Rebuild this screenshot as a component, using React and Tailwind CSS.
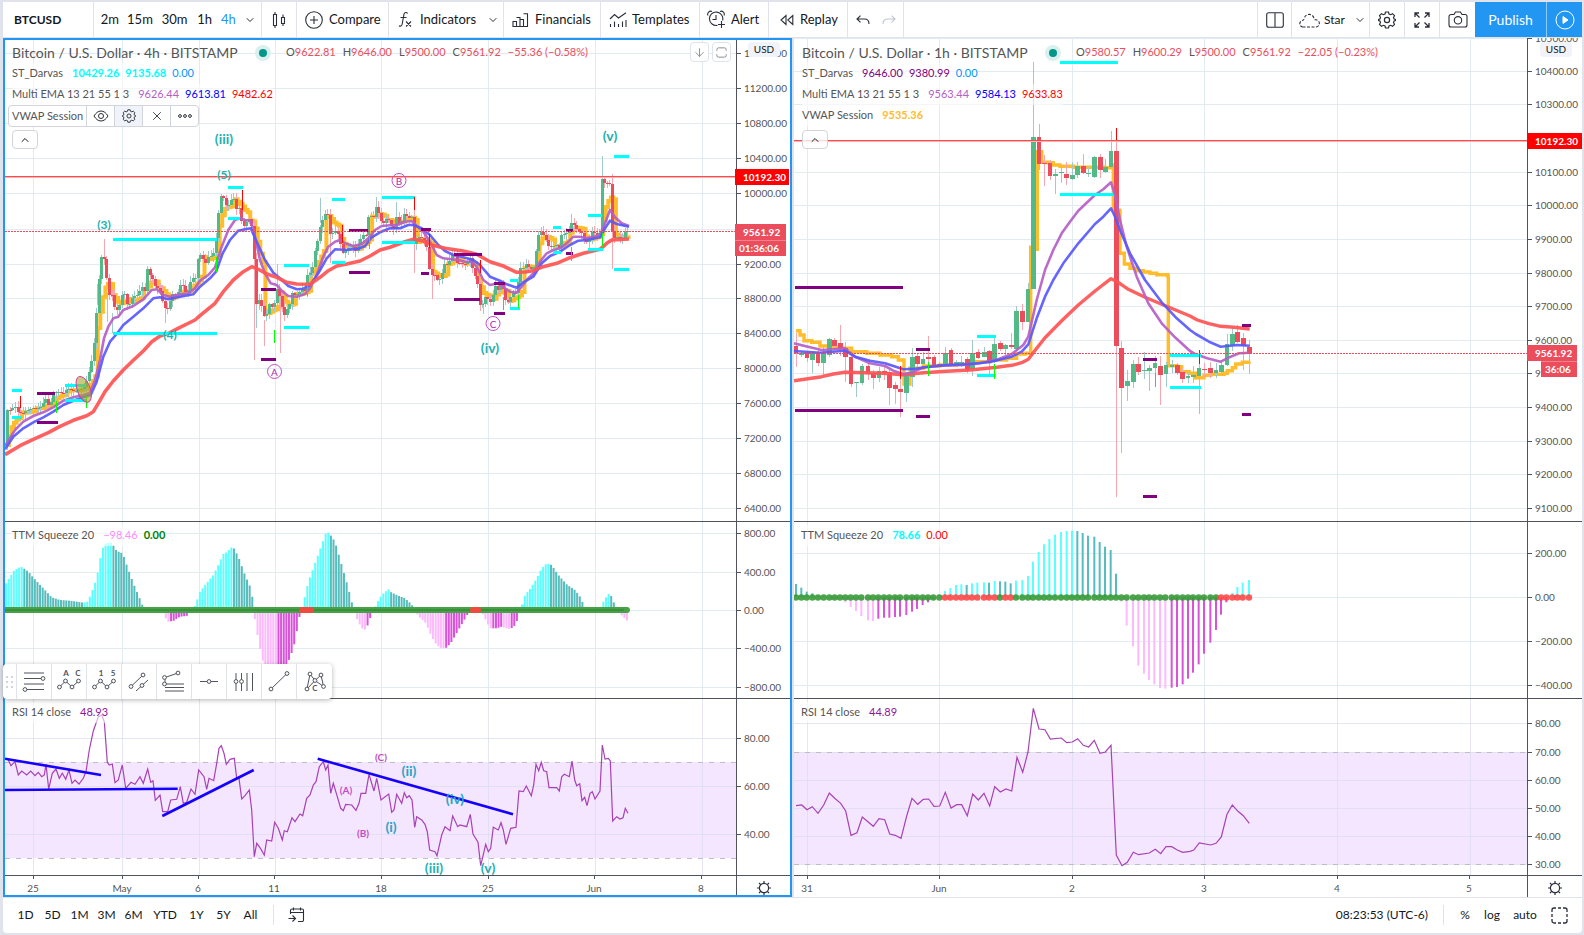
import React from 'react';
import { ChevronDown, ChevronUp, ArrowDown, X } from 'lucide-react';

/* ===== DATA ===== */
// Series are kept as flat "x,y x,y" strings in thirds of a pixel, relative to a chunk origin
const pts = (x0, y0, str) =>
  str.trim().split(/\s+/).map(p => {
    const [x, y] = p.split(',').map(Number);
    return [x0 + x / 3, y0 + y / 3];
  });
const rows = (x0, y0, str) =>
  str.trim().split(/\s+/).map(p => {
    const [x, ...ys] = p.split(',').map(Number);
    return [x0 + x / 3, ...ys.map(y => y0 + y / 3)];
  });
const segs = (x0, y0, list) => list.map(([x1, x2, y]) => [x0 + x1 / 3, x0 + x2 / 3, y0 + y / 3]);
const ticks = (x0, y0, list) => list.map(([x, a, b]) => [x0 + x / 3, y0 + a / 3, y0 + b / 3]);

const CLOSE_4H = [
  ...pts(0, 160, `16,855 19,748 30,750 45,738 55,757 70,760 80,752 95,745 110,745 125,740 140,712 148,745 160,700 175,695 190,700 205,685
    213,690 225,695 240,690 250,685 258,670 268,635 278,590 285,530 292,435 303,290 312,290 320,345 325,405 337,405 347,460 357,440
    365,425 370,362 377,430 388,435 400,408 415,405 425,378 435,395 443,325 452,348 460,360 468,385 477,385 485,400 490,435 500,450
    508,445 515,400 525,405 535,395 547,358 552,400 565,390 575,355 590,352 597,278 607,290 617,310 625,290 640,285 650,225 657,150
    665,100 672,115 682,145 690,125 700,110 710,150 720,140 727,205 735,195 745,175 753,185 762,240 765,460 775,410 782,430 790,450
    797,490 805,430 815,440 822,450 828,380 837,400 845,430 851,475 860,450 870,430 877,400 887,405 897,400 907,385 917,395 925,325
    935,350 942,280 950,265 958,210 965,190 973,165 983,160 993,235 1003,210 1012,215 1020,245 1030,280 1040,265 1050,265 1060,260
    1068,275 1080,240 1090,225 1100,225 1108,150 1118,185 1128,140 1140,170 1147,195 1160,175 1169,180`),
  ...pts(390, 120, `0,290 8,345 20,290 30,315 43,280 55,295 65,290 73,375 85,350 97,355 108,365 115,400 120,465 133,465 145,485 155,465
    163,430 175,435 185,405 195,405 203,430 215,430 230,435 243,410 250,455 262,480 270,555 280,550 290,520 297,550 305,545 315,495
    325,510 335,490 343,520 350,555 360,535 370,520 383,520 388,445 400,445 410,430 420,450 430,445 437,410 443,350 453,335 465,350
    477,378 490,380 500,375 508,385 515,345 530,340 540,335 547,300 557,325 570,335 577,340 585,365 597,365 607,335 620,345 630,340
    637,170 645,190 655,190 663,195 668,360 680,350 692,355 702,352 708,320 714,335`),
];

const EMA_4H = [
  {
    color: '#b560c6', width: 2.6, data: [
      ...pts(0, 160, `15,858 45,810 70,785 100,768 130,757 160,742 190,722 220,712 250,705 270,698 285,660 300,600 312,535 325,500 340,475
        355,470 370,450 400,438 430,418 455,390 470,388 490,405 510,410 540,403 565,400 585,385 600,362 625,345 645,322 665,260 685,210
        705,180 720,175 735,180 752,182 765,230 780,300 795,340 812,370 830,375 845,392 865,408 890,410 915,402 930,385 950,345 970,290
        985,260 1005,245 1020,240 1035,250 1060,258 1085,252 1105,235 1125,210 1145,198 1170,196`),
      ...pts(390, 120, `20,315 45,305 65,303 80,318 100,335 120,365 140,405 160,415 185,418 205,420 225,425 245,425 260,440 280,480 300,495
        325,490 345,505 360,515 380,518 395,500 410,480 430,460 450,425 470,400 490,390 510,385 530,370 550,350 570,350 590,355 610,350
        630,345 645,310 660,270 675,292 695,310 717,318`),
    ],
  },
  {
    color: '#5858ff', width: 2.6, data: [
      ...pts(0, 160, `15,868 40,830 70,805 100,787 130,772 160,755 190,735 220,722 250,712 272,705 290,665 310,590 330,545 350,522 370,495
        400,470 430,445 460,415 480,412 505,418 540,410 580,403 600,380 630,355 648,335 668,280 690,240 715,212 735,208 752,205 770,245
        795,300 820,338 840,355 865,378 890,388 910,386 930,375 955,340 980,295 1005,268 1040,270 1075,266 1095,258 1115,232 1140,217`),
      ...pts(390, 120, `0,325 30,325 55,315 70,315 95,325 120,345 145,375 165,393 190,405 220,412 250,420 270,435 300,470 330,482 350,493
        380,503 400,487 430,470 455,430 480,408 510,395 540,375 565,362 590,360 630,352 645,325 660,302 680,312 717,320`),
    ],
  },
  {
    color: '#ff5454', width: 3.6, data: [
      ...pts(0, 160, `15,884 60,857 100,838 145,818 180,799 220,781 260,767 280,755 295,730 315,695 340,663 370,630 400,601 430,573 455,545
        480,528 510,518 540,502 585,480 600,467 645,430 670,395 700,360 730,335 755,320 775,328 800,342 830,352 860,367 890,372 930,373
        960,352 985,332 1010,318 1040,312 1080,303 1110,288 1140,270`),
      ...pts(390, 120, `0,382 40,367 70,358 95,362 125,375 165,385 220,393 260,403 300,425 340,438 380,457 405,456 430,452 460,440 500,430
        540,413 580,400 630,388 650,370 665,360 717,357`),
    ],
  },
];

const BOX_4H = {
  cyan: [
    ...segs(0, 160, [[36, 66, 690], [36, 66, 771], [195, 258, 675], [195, 258, 721], [340, 652, 236], [340, 652, 519], [683, 729, 82],
      [683, 720, 174], [851, 927, 316], [851, 927, 502], [996, 1034, 116], [996, 1034, 307], [1147, 1246, 110], [1147, 1246, 246]]),
    ...segs(390, 120, [[488, 512, 320], [488, 512, 397], [595, 637, 285], [595, 640, 386], [672, 717, 109], [672, 717, 448], [360, 383, 480], [360, 389, 565]]),
  ],
  purple: [
    ...segs(0, 160, [[111, 165, 698], [111, 173, 785], [782, 828, 387], [782, 828, 597], [1048, 1103, 209], [1048, 1110, 335]]),
    ...segs(390, 120, [[92, 122, 327], [92, 118, 458], [191, 275, 401], [191, 270, 536], [313, 344, 488], [313, 344, 580], [527, 550, 331], [527, 550, 398]]),
  ],
};

const TICKS_4H = {
  red: [...ticks(0, 160, [[61, 707, 745], [727, 90, 150], [1028, 195, 250]]), ...ticks(390, 120, [[73, 230, 270], [118, 342, 385], [271, 420, 460]])],
  green: [
    ...ticks(0, 160, [[169, 722, 760], [259, 708, 744], [648, 290, 335], [823, 510, 550], [922, 370, 408], [1107, 225, 268]]),
    ...ticks(390, 120, [[340, 530, 570], [385, 525, 565], [545, 380, 424], [637, 340, 380]]),
  ],
  wickUp: [
    ...ticks(0, 160, [[338, 460, 520], [770, 410, 505], [962, 114, 190], [1130, 110, 150], [292, 372, 435]]),
    ...ticks(390, 120, [[20, 245, 290], [280, 550, 582], [545, 282, 330], [637, 108, 170]]),
  ],
  wickDown: [
    ...ticks(0, 160, [[313, 237, 300], [322, 400, 486], [497, 450, 489], [764, 240, 600], [794, 480, 557], [840, 400, 580], [832, 313, 380], [991, 150, 308]]),
    ...ticks(390, 120, [[73, 270, 458], [126, 465, 537], [272, 540, 572], [668, 162, 448]]),
  ],
};

const SQUEEZE_4H = [
  ...pts(0, 515, `18,205 30,185 42,167 55,158 66,156 85,170 100,188 130,220 155,247 180,255 210,257 250,263 262,260 272,240 290,190 303,118
    312,87 335,82 350,108 368,115 380,150 400,205 415,240 428,272 440,283 460,275 480,277 490,286 496,308 505,320 520,318 540,305 560,303
    572,287 585,272 600,230 615,210 640,180 660,140 668,118 680,112 692,98 700,97 715,125 735,180 755,225 760,280 768,335 780,400 790,445
    830,500 860,445 870,430 885,380 897,310 905,285 912,255 925,200 945,145 965,90 980,48 990,58 1005,80 1025,150 1045,220 1060,280
    1070,310 1085,340 1098,345 1110,310 1120,290 1130,265 1145,240 1165,222`),
  ...pts(390, 515, `0,230 20,240 45,250 65,268 75,290 90,308 108,325 125,365 140,390 155,400 170,398 185,380 205,345 220,320 237,290 260,280
    272,285 285,310 300,340 320,340 335,335 355,342 370,338 380,320 390,290 405,240 420,222 440,190 455,160 470,145 485,150 505,180
    530,208 555,225 570,245 585,278 610,290 630,285 640,260 652,240 660,233 668,255 680,280 692,298 711,317`),
];

const RSI_4H = [
  ...pts(0, 515, `15,730 25,735 33,752 45,740 55,780 65,768 80,780 92,768 105,782 115,772 125,785 133,780 138,748 146,822 157,775 168,762
    178,790 187,775 197,793 207,765 216,805 225,795 237,807 250,790 258,770 268,705 280,648 295,605 305,600 313,620 322,742 328,750
    337,747 345,803 355,795 367,750 377,820 393,802 405,808 420,785 430,805 443,762 452,802 459,797 466,856 480,840 488,890 503,890
    512,855 530,853 541,815 550,865 560,862 573,822 585,838 596,765 612,785 620,823 627,790 641,797 650,745 657,700 664,692 672,715
    679,748 690,733 703,730 710,790 717,790 725,852 735,842 748,825 755,885 763,1025 770,985 780,998 793,1020 800,975 815,978 824,922
    835,940 847,975 853,947 862,950 876,908 885,920 900,897 908,902 920,850 930,840 940,810 948,800 958,755 970,740 977,765 984,750
    992,835 1000,805 1012,845 1022,880 1030,887 1037,868 1055,870 1068,886 1077,865 1083,835 1097,835 1107,778 1122,828 1130,790
    1143,855 1166,837`),
  ...pts(390, 515, `5,892 12,885 20,838 35,865 43,833 50,848 58,842 66,855 74,937 80,905 95,915 105,928 112,950 119,1005 135,1010 141,1022
    155,960 165,935 180,947 188,903 203,935 210,930 230,935 241,898 249,957 264,982 272,1052 287,988 295,1010 302,1000 310,937 325,945
    333,923 340,945 348,988 362,940 378,937 387,828 400,830 409,813 424,842 431,810 438,748 446,767 454,742 461,767 470,770 477,818
    500,818 508,828 515,785 523,778 538,785 546,738 554,795 560,812 569,806 576,857 584,847 591,872 600,835 607,830 615,852 630,828
    637,690 645,732 655,730 661,738 668,918 680,905 690,912 699,908 706,880 714,895`),
];

// x, open, close, high, low
const CANDLES_1H = [
  ...rows(790, 100, `18,738,760,700,800 35,765,758,755,770 51,760,775,755,785 67,780,760,755,820 84,758,788,750,798 101,788,758,735,825
    118,765,718,713,772 134,720,738,715,745 151,730,747,675,768 167,745,772,725,845 183,770,852,765,860 199,850,846,845,892
    216,848,798,792,855 234,797,822,790,840 250,820,835,810,868 267,833,812,800,845 284,813,820,800,840 299,815,863,805,915
    316,855,867,845,912 332,868,877,800,950 350,878,825,815,905 367,830,772,745,860 383,768,793,760,800 399,793,777,755,795
    416,770,777,708,792 432,770,795,765,800 449,793,796,785,800 466,792,760,742,795 483,750,796,745,800 499,792,787,780,795
    515,790,785,768,800 532,778,810,770,820 547,808,760,720,827 564,755,773,748,778 583,770,756,740,772 599,753,785,750,822
    614,785,732,715,790 631,729,747,724,752 647,747,735,733,765 664,736,741,700,748 680,748,632,618,752 698,633,665,612,690
    714,665,567,550,667 731,567,111,-113,567 747,111,192,72,210 763,188,192,165,257 780,190,228,180,240 796,228,222,208,283
    814,220,217,195,250 830,221,234,185,254 847,236,225,185,240 863,225,198,185,235 880,198,218,162,222 896,223,219,200,232
    914,230,170,167,235 931,172,210,162,235 946,215,200,178,220 963,202,153,92,205 979,153,737,85,1190 995,745,863,723,1060
    1012,857,843,810,902 1030,845,792,780,865 1046,792,815,770,825 1063,812,809,755,837 1079,812,804,795,873 1095,804,789,768,820
    1111,798,825,768,915 1128,822,795,785,860 1146,800,795,780,820 1162,795,818,788,825 1178,815,837,805,850`),
  ...rows(1184, 100, `12,833,829,820,850 29,831,825,797,850 45,828,804,780,942 62,807,811,790,830 80,804,820,787,835 96,818,810,790,833
    113,817,795,785,820 129,795,732,702,797 145,735,702,680,752 161,697,725,675,730 178,714,738,700,810 196,740,761,720,822`),
];

const VWAP_1H = [
  ...pts(790, 100, `18,692 30,705 42,722 65,727 90,738 120,742 155,745 185,755 230,760 270,765 305,770 325,780 342,852 360,805 400,798 450,795
    500,793 545,785 600,780 650,775 680,762 705,760 722,738 722,442 740,448 742,155 755,187 775,188 790,195 810,199 850,202 945,203
    965,195 970,330 987,332 990,460 1003,492 1020,505 1040,512 1060,516 1080,520 1100,524 1133,528 1135,797 1160,800 1175,815`),
  ...pts(1184, 100, `15,820 35,833 60,826 80,823 120,820 130,812 145,803 155,792 175,787 195,784`),
];

const EMA_1H = [
  {
    color: '#ff5454', width: 3.4, data: [
      ...pts(790, 100, `12,842 95,830 130,822 165,817 280,820 340,824 400,818 470,814 540,810 620,802 665,796 695,788 715,778 740,745 765,713
        815,662 865,615 915,573 963,536 985,547 1015,568 1065,592 1115,613`),
      ...pts(1184, 100, `18,648 40,660 75,671 110,679 150,682 197,687`),
    ],
  },
  {
    color: '#b560c6', width: 2.6, data: [
      ...pts(790, 100, `12,730 60,742 95,750 130,748 165,745 195,770 240,790 285,798 310,812 340,822 365,818 400,802 450,797 520,795 570,790
        625,778 665,762 700,735 715,710 740,600 765,510 790,450 815,400 840,365 865,332 890,308 915,285 940,268 963,247 975,285
        990,360 1010,440 1040,530 1075,610 1115,670 1155,712`),
      ...pts(1184, 100, `18,753 35,763 70,775 110,785 140,770 165,760 197,758`),
    ],
  },
  {
    color: '#5858ff', width: 2.6, data: [
      ...pts(790, 100, `12,753 90,758 165,752 195,770 240,782 285,790 340,808 375,806 420,800 470,795 540,792 600,786 665,770 695,755 715,733
        740,655 765,590 790,540 820,490 865,430 915,372 940,350 963,325 975,350 990,390 1020,460 1065,540 1115,607 1160,655`),
      ...pts(1184, 100, `18,690 35,702 75,725 110,740 160,735 197,737`),
    ],
  },
];

const BOX_1H = {
  cyan: segs(790, 100, [[561, 618, 709], [561, 618, 826], [810, 970, 282], [810, 984, -113], [1140, 1232, 766], [1140, 1232, 860]]),
  purple: [
    ...segs(790, 100, [[14, 338, 561], [14, 338, 930], [378, 420, 746], [378, 420, 948], [1058, 1100, 776], [1058, 1100, 1189]]),
    ...segs(1184, 100, [[174, 200, 674], [174, 200, 941]]),
  ],
};

const TICKS_1H = {
  red: [...ticks(790, 100, [[332, 798, 838], [979, 83, 125]]), ...ticks(1184, 100, [[46, 750, 793]])],
  green: ticks(790, 100, [[416, 785, 828], [614, 792, 836], [1095, 820, 860]]),
  wickUp: [],
  wickDown: [],
};

const SQUEEZE_1H = [
  ...pts(790, 515, `18,207 34,218 50,230 67,235 84,243 101,245 118,250 134,250 150,252 166,262 182,276 198,288 214,303 234,316 249,318
    265,311 282,308 298,308 315,306 330,305 349,300 366,290 381,282 398,270 414,262 430,252 448,240 465,228 481,219 498,210 514,208
    530,210 546,205 562,203 582,202 597,203 614,198 630,199 646,200 662,205 678,197 697,195 714,183 729,140 746,111 762,88 778,72
    795,59 813,51 830,48 846,47 862,48 878,54 894,62 913,65 929,81 945,95 962,105 978,176 994,260 1010,332 1029,394 1045,452
    1062,476 1077,495 1093,508 1110,519 1126,521 1145,518 1161,516 1178,508`),
  ...pts(1184, 515, `12,491 27,473 44,448 60,416 79,383 96,345 111,299 127,262 145,234 160,216 176,203 195,195`),
];

const RSI_1H = [
  ...pts(790, 515, `18,872 35,870 51,884 67,875 84,895 101,870 118,834 134,850 152,865 167,888 183,961 201,953 217,906 250,934 267,911
    284,914 299,957 316,961 333,970 350,903 366,850 383,868 400,853 416,852 432,874 449,873 466,832 483,879 500,869 515,869 532,902
    548,837 565,855 582,835 599,873 614,815 631,831 648,822 665,828 681,727 698,772 714,711 730,580 747,642 765,644 781,672 814,669
    830,683 847,681 863,671 880,691 896,696 913,676 930,715 946,711 963,691 979,1020 996,1052 1012,1042 1030,1012 1046,1019
    1078,1014 1096,1003 1112,1016 1128,995 1145,995 1162,1005 1178,1012`),
  ...pts(1184, 515, `18,1009 29,1005 46,984 80,990 96,985 112,966 129,898 145,870 162,889 178,902 196,925`),
];

/* ===== SERIES HELPERS ===== */
const resample = (data, step) => {
  const out = [];
  let j = 0;
  for (let x = data[0][0]; x <= data[data.length - 1][0]; x += step) {
    while (j < data.length - 2 && data[j + 1][0] < x) j++;
    const [x1, y1] = data[j];
    const [x2, y2] = data[j + 1];
    out.push([x, y1 + ((y2 - y1) * (x - x1)) / (x2 - x1)]);
  }
  return out;
};

const toCandles = closes =>
  closes.slice(1).map(([x, c], i) => {
    const o = closes[i][1];
    const up = 1 + Math.abs(Math.sin(i * 12.9)) * 5;
    const dn = 1 + Math.abs(Math.sin(i * 7.3 + 1)) * 5;
    return [x, o, c, Math.min(o, c) - up, Math.max(o, c) + dn];
  });

// running session average, restarted every six bars
const toVwap = closes => {
  let sum = 0;
  let n = 0;
  return closes.map(([x, y], i) => {
    if (i % 6 === 0) { sum = 0; n = 0; }
    sum += i ? (y + closes[i - 1][1]) / 2 : y;
    n++;
    return [x + 1, sum / n];
  });
};

const line = data => data.map(([x, y], i) => `${i ? 'L' : 'M'}${x.toFixed(1)} ${y.toFixed(1)}`).join('');
const stepLine = data => data.map(([x, y], i) => (i ? `H${x.toFixed(1)}V${y.toFixed(1)}` : `M${x.toFixed(1)} ${y.toFixed(1)}`)).join('');

const BARS_4H = resample(CLOSE_4H, 2.54);

const CHARTS = [
  {
    id: '4h',
    x: 5, top: 40, plotW: 731, axisW: 54, bottom: 895,
    gridX: [33, 122, 199, 275, 381, 488, 595, 702],
    times: [[33, '25'], [122, 'May'], [198, '6'], [274, '11'], [381, '18'], [488, '25'], [594, 'Jun'], [701, '8']],
    price: [[53, '11600.00'], [88, '11200.00'], [123, '10800.00'], [158, '10400.00'], [193, '10000.00'], [229, null], [264, '9200.00'], [298, '8800.00'],
      [333, '8400.00'], [368, '8000.00'], [403, '7600.00'], [438, '7200.00'], [473, '6800.00'], [508, '6400.00']],
    squeezeAxis: [[533, '800.00'], [572, '400.00'], [610, '0.00'], [648, '−400.00'], [687, '−800.00']],
    rsiAxis: [[738, '80.00'], [786, '60.00'], [834, '40.00']],
    candles: toCandles(BARS_4H), bodyW: 3,
    vwap: toVwap(BARS_4H), vwapW: 4, ema: EMA_4H, box: BOX_4H, ticks: TICKS_4H,
    levelY: 176, lastY: 231,
    squeeze: resample(SQUEEZE_4H, 2.62), barW: 2, zero: 610, dots: null,
    redDots: [[299, 314], [470, 481]],
    rsi: RSI_4H, band: [762, 858],
  },
  {
    id: '1h',
    x: 794, top: 38, plotW: 733, axisW: 55, bottom: 897,
    gridX: [807, 939, 1072, 1204, 1337, 1470],
    times: [[807, '31'], [939, 'Jun'], [1072, '2'], [1204, '3'], [1337, '4'], [1469, '5']],
    price: [[38, '10500.00'], [71, '10400.00'], [104, '10300.00'], [172, '10100.00'], [205, '10000.00'], [239, '9900.00'], [273, '9800.00'], [306, '9700.00'],
      [340, '9600.00'], [373, '9500.00'], [407, '9400.00'], [441, '9300.00'], [474, '9200.00'], [508, '9100.00']],
    squeezeAxis: [[553, '200.00'], [597, '0.00'], [641, '−200.00'], [685, '−400.00']],
    rsiAxis: [[723, '80.00'], [752, '70.00'], [780, '60.00'], [808, '50.00'], [836, '40.00'], [864, '30.00']],
    candles: CANDLES_1H, bodyW: 4.4,
    vwap: VWAP_1H, vwapW: 3.4, ema: EMA_1H, box: BOX_1H, ticks: TICKS_1H,
    levelY: 140, lastY: 353,
    squeeze: SQUEEZE_1H, barW: 2, zero: 597, dots: 3,
    redDots: [[943, 998], [1003, 1014], [1220, 1260]],
    rsi: RSI_1H, band: [752, 864],
  },
];

/* ===== CHART PANES ===== */
const Grid = ({ c, ys, y1, y2 }) => (
  <g shapeRendering="crispEdges" fill="#e1ecf2">
    {c.gridX.map(x => <rect key={x} x={x} y={y1} width="1" height={y2 - y1} />)}
    {ys.map(([y]) => <rect key={y} x={c.x} y={y} width={c.plotW} height="1" />)}
  </g>
);

const Plot = ({ c, y1, y2, label, children }) => (
  <svg role="img" aria-label={label} viewBox={`${c.x} ${y1} ${c.plotW} ${y2 - y1}`} preserveAspectRatio="none" className="block h-full min-w-0 flex-1 bg-white">
    {children}
  </svg>
);

const Axis = ({ c, y1, y2, labels, children }) => {
  const x = c.x + c.plotW + 1;
  return (
    <div className={`relative h-full shrink-0 border-l border-[#50535e] bg-white ${c.id === '4h' ? 'w-[54px]' : 'w-[55px]'}`}>
      <svg viewBox={`${x} ${y1} ${c.axisW - 1} ${y2 - y1}`} className="block h-full w-full" fontSize="10" fill="#555">
        {labels.filter(l => l[1]).map(([y, t]) => (
          <g key={y}>
            <rect x={x} y={y} width="4" height="1" fill="#50535e" shapeRendering="crispEdges" />
            <text x={x + 7} y={y + 4}>{t}</text>
          </g>
        ))}
        {children}
      </svg>
    </div>
  );
};

const Wave = ({ x, y, children, color = '#1fb0b0', size = 12 }) => (
  <text x={x} y={y - 1} fontSize={size} fontWeight="700" fill={color} textAnchor="middle" dominantBaseline="central">{children}</text>
);

const CircleWave = ({ x, y, children }) => (
  <g>
    <circle cx={x} cy={y} r="7" fill="none" stroke="#c44bc4" />
    <text x={x} y={y} fontSize="10" fill="#b01fb0" textAnchor="middle" dominantBaseline="central">{children}</text>
  </g>
);

const PricePlot = ({ c }) => (
  <Plot c={c} y1={c.top} y2={521} label={`BTCUSD ${c.id} price`}>
    <Grid c={c} ys={c.price} y1={c.top} y2={521} />
    <path d={stepLine(c.vwap)} fill="none" stroke="#ffbd2b" strokeWidth={c.vwapW} />
    <g shapeRendering="crispEdges">
      {c.ticks.wickUp.map(([x, a, b]) => <rect key={x} x={x - 0.5} y={a} width="1" height={b - a} fill="#a0c9cb" />)}
      {c.ticks.wickDown.map(([x, a, b]) => <rect key={x} x={x - 0.5} y={a} width="1" height={b - a} fill="#f5a6ae" />)}
      {c.candles.map(([x, o, cl, h, l], i) => (
        <rect key={i} x={x - 0.5} y={h} width="1" height={l - h} fill={cl < o ? '#a0c9cb' : '#f5a6ae'} />
      ))}
    </g>
    <g shapeRendering="crispEdges">
      {c.candles.map(([x, o, cl], i) => (
        <rect key={i} x={x - c.bodyW / 2} y={Math.min(o, cl)} width={c.bodyW} height={Math.max(1, Math.abs(cl - o))} fill={cl < o ? '#53b987' : '#eb4d5c'} />
      ))}
    </g>
    {c.ema.map(e => <path key={e.color} d={line(e.data)} fill="none" stroke={e.color} strokeWidth={e.width} strokeOpacity=".92" strokeLinejoin="round" />)}
    <g shapeRendering="crispEdges">
      {c.box.purple.map(([x1, x2, y], i) => <rect key={i} x={x1} y={y - 1} width={x2 - x1} height="3" fill="#800080" />)}
      {c.box.cyan.map(([x1, x2, y], i) => <rect key={i} x={x1} y={y - 1} width={x2 - x1} height="3" fill="#00ffff" />)}
      {c.ticks.red.map(([x, a, b]) => <rect key={x} x={x - 0.5} y={a} width="1" height={b - a} fill="#ff0000" />)}
      {c.ticks.green.map(([x, a, b]) => <rect key={x} x={x - 0.5} y={a} width="1" height={b - a} fill="#00ff00" />)}
      <rect x={c.x} y={c.levelY} width={c.plotW} height="1" fill="#ff4b4b" />
      <rect x={c.x} y={c.levelY + 1} width={c.plotW} height="1" fill="#ffb0b0" />
      <path d={`M${c.x} ${c.lastY + 0.5}H${c.x + c.plotW}`} stroke="#eb4d5c" strokeDasharray="2 1" />
    </g>
    {c.id === '4h' && (
      <g>
        <ellipse cx="83.7" cy="389.3" rx="6.5" ry="13.5" transform="rotate(-20 83.7 389.3)" fill="#a5a52a" fillOpacity=".6" stroke="#d43f9f" />
        <Wave x={104} y={225}>(3)</Wave>
        <Wave x={224} y={175}>(5)</Wave>
        <Wave x={170} y={335}>(4)</Wave>
        <Wave x={224} y={139} size={14}>(iii)</Wave>
        <Wave x={490} y={348} size={14}>(iv)</Wave>
        <Wave x={610} y={136} size={14}>(v)</Wave>
        <CircleWave x={274.5} y={371.5}>A</CircleWave>
        <CircleWave x={399} y={180.5}>B</CircleWave>
        <CircleWave x={493} y={323.5}>C</CircleWave>
      </g>
    )}
  </Plot>
);

const squeezeColor = (v, prev) => {
  if (v >= 0) return v >= prev ? '#5cffff' : '#56bcbc';
  return v < prev ? '#ffb9ff' : '#da52da';
};

const SqueezePlot = ({ c }) => {
  const last = c.squeeze[c.squeeze.length - 1][0];
  const isRed = x => c.redDots.some(([a, b]) => x >= a && x <= b);
  return (
    <Plot c={c} y1={522} y2={698} label="TTM Squeeze histogram">
      <Grid c={c} ys={c.squeezeAxis} y1={522} y2={698} />
      {c.squeeze.map(([x, y], i) => {
        const v = c.zero - y;
        const prev = i ? c.zero - c.squeeze[i - 1][1] : v + (c.id === '1h' ? 1 : -1);
        return <rect key={i} x={x - c.barW / 2} y={Math.min(y, c.zero)} width={c.barW} height={Math.abs(v)} fill={squeezeColor(v, prev)} />;
      })}
      {c.dots
        ? c.squeeze.map(([x], i) => <circle key={i} cx={x} cy={c.zero + 0.5} r="3.2" fill={isRed(x) ? '#ff4444' : '#339933'} fillOpacity=".88" />)
        : (
          <g>
            <rect x={c.x} y={c.zero - 3} width={last - c.x} height="6" fill="#47a247" />
            <rect x={c.x} y={c.zero - 1} width={last - c.x} height="2" fill="#3a8f3a" />
            {c.redDots.map(([a, b]) => <rect key={a} x={a} y={c.zero - 3} width={b - a} height="6" rx="3" fill="#f04a3e" />)}
            <circle cx={last} cy={c.zero} r="3" fill="#47a247" />
          </g>
        )}
    </Plot>
  );
};

const RsiPlot = ({ c }) => (
  <Plot c={c} y1={699} y2={875} label="RSI">
    <rect x={c.x} y={c.band[0]} width={c.plotW} height={c.band[1] - c.band[0]} fill="#f4e6fe" />
    <g shapeRendering="crispEdges" fill="#d8dcee" fillOpacity=".7">
      {c.gridX.map(x => <rect key={x} x={x} y="699" width="1" height="176" />)}
      {c.rsiAxis.map(([y]) => <rect key={y} x={c.x} y={y} width={c.plotW} height="1" />)}
      {c.band.map(y => <path key={y} d={`M${c.x} ${y + 0.5}H${c.x + c.plotW}`} stroke="#c0bcc6" strokeDasharray="5 6" />)}
    </g>
    <path d={line(c.rsi)} fill="none" stroke="#a742b4" strokeWidth="1.2" />
    {c.id === '4h' && (
      <g>
        <g stroke="#1500ff" strokeWidth="2.6">
          <path d="M5 758.7L101 775M5 790L177.7 788.7M162.3 816L253.7 770M317.7 758.7L513 814.3" />
        </g>
        <Wave x={381} y={758} size={10} color="#c44bc4">(C)</Wave>
        <Wave x={346} y={791} size={10} color="#c44bc4">(A)</Wave>
        <Wave x={363} y={834} size={10} color="#c44bc4">(B)</Wave>
        <Wave x={391} y={827} size={14} color="#27a5c4">(i)</Wave>
        <Wave x={409} y={771} size={14} color="#27a5c4">(ii)</Wave>
        <Wave x={455} y={799} size={14} color="#27a5c4">(iv)</Wave>
        <Wave x={434} y={868} size={14}>(iii)</Wave>
        <Wave x={488} y={868} size={14}>(v)</Wave>
      </g>
    )}
  </Plot>
);

const PriceTag = ({ className, children }) => (
  <div className={`absolute left-[-1px] h-4 pl-2 text-[10px] leading-4 font-bold text-white ${className}`}>{children}</div>
);

const SunIcon = () => (
  <svg width="16" height="16" viewBox="0 0 16 16" fill="none" stroke="#2a2e39" strokeWidth="1.2">
    <circle cx="8" cy="8" r="4.6" />
    <path d="M8 1v2.4M8 12.6V15M1 8h2.4M12.6 8H15M3 3l1.7 1.7M11.3 11.3L13 13M13 3l-1.7 1.7M4.7 11.3L3 13" />
  </svg>
);

const IconBox = ({ label, className = '', children }) => (
  <button type="button" aria-label={label} className={`flex items-center justify-center ${className}`}>{children}</button>
);

/* ===== LEGEND ===== */
const Title = ({ tf, o, h, l, c, chg }) => (
  <div className="flex h-[21px] items-center">
    <span className="w-[243px] text-sm whitespace-nowrap text-[#555]">Bitcoin / U.S. Dollar · {tf} · BITSTAMP</span>
    <span className="mr-[15px] flex size-4 items-center justify-center rounded-full bg-[#d9f0ee]"><i className="size-2 rounded-full bg-[#009688]" /></span>
    <span className="flex gap-[7px] text-[11px] whitespace-nowrap text-[#eb4d5c]">
      {[['O', o], ['H', h], ['L', l], ['C', c]].map(([k, v]) => <span key={k}><span className="text-[#555]">{k}</span>{v}</span>)}
      <span>{chg}</span>
    </span>
  </div>
);

const Row = ({ name, children }) => (
  <div className="flex h-[21px] w-fit items-center gap-[9px] bg-white/60 text-[11px] whitespace-nowrap text-[#555]">
    <span>{name}</span>
    <span className="flex gap-[6px]">{children}</span>
  </div>
);

const Collapse = ({ className = '' }) => (
  <IconBox label="Collapse legend" className={`h-[19px] w-[26px] rounded-sm border border-[#d1d4dc] bg-white/80 ${className}`}>
    <ChevronUp size={12} strokeWidth={2} color="#131722" />
  </IconBox>
);

const EyeIcon = () => (
  <svg width="16" height="12" viewBox="0 0 16 12" fill="none" stroke="#2a2e39">
    <path d="M1 6c1.800-3 4.200-5 7-5s5.200 2 7 5c-1.800 3-4.200 5-7 5s-5.200-2-7-5z" /><circle cx="8" cy="6" r="2.500" />
  </svg>
);

const NutIcon = ({ size = 14 }) => (
  <svg width={size} height={size} viewBox="0 0 18 18" fill="none" stroke="#2a2e39" strokeWidth="1.200">
    <path d="M7.500 1h3l.5 2 1.700.7L14.500 2.700l2 2-1 1.800.6 1.500 1.400.5v1l-1.400.5-.6 1.500 1 1.800-2 2-1.800-1L11 15l-.5 2h-3L7 15l-1.700-.7-1.800 1-2-2 1-1.800L1.900 10 .5 9.500v-1L1.900 8l.6-1.500-1-1.800 2-2 1.800 1L7 3z" />
    <circle cx="9" cy="9" r="2.600" />
  </svg>
);

const VwapToolbar = () => (
  <div className="-ml-1 flex h-[22px] w-[191px] items-stretch rounded-sm border border-[#d1d4dc] bg-white text-[11px] text-[#555]">
    <span className="flex flex-1 items-center pl-[3px] whitespace-nowrap">VWAP Session</span>
    <IconBox label="Hide" className="w-7 border-l border-[#d1d4dc]"><EyeIcon /></IconBox>
    <IconBox label="Settings" className="w-7 border-l border-[#d1d4dc] bg-[#f0f3fa]"><NutIcon /></IconBox>
    <IconBox label="Remove" className="w-7 border-l border-[#d1d4dc]"><X size={14} strokeWidth={1.500} color="#2a2e39" /></IconBox>
    <IconBox label="More" className="w-7 border-l border-[#d1d4dc]">
      <svg width="14" height="4" viewBox="0 0 14 4" fill="none" stroke="#2a2e39"><circle cx="2" cy="2" r="1.400" /><circle cx="7" cy="2" r="1.400" /><circle cx="12" cy="2" r="1.400" /></svg>
    </IconBox>
  </div>
);

const PaneLegend = ({ name, children }) => (
  <div className="absolute top-[3px] left-[7px]"><Row name={name}>{children}</Row></div>
);

/* ===== CHART ===== */
const Chart = ({ c, active, legend, squeezeLegend, rsiLegend }) => (
  <section className={`relative min-w-0 bg-white ${active ? 'border-2 border-[#2196f3]' : ''}`}>
    <div className={`relative flex ${active ? 'h-[481px]' : 'h-[483px]'}`}>
      <PricePlot c={c} />
      <Axis c={c} y1={c.top} y2={521} labels={c.price}>{null}</Axis>
      <div className={`absolute right-0 w-[54px] ${active ? 'top-0' : 'top-[2px]'}`}>
        <button type="button" className="absolute top-[2px] left-3 h-[15px] w-8 rounded-sm bg-[#f0f3fa] text-[10px] leading-[15px] text-[#131722]">USD</button>
        {active ? (
          <>
            <PriceTag className="top-[129px] w-[54px] bg-[#ff0000]">10192.30</PriceTag>
            <PriceTag className="top-[184px] w-[51px] bg-[#eb4d5c]">9561.92</PriceTag>
            <PriceTag className="top-[200px] w-[51px] border-t border-[#f0828c] bg-[#eb4d5c] leading-[15px]"><span className="-ml-1">01:36:06</span></PriceTag>
          </>
        ) : (
          <>
            <PriceTag className="top-[93px] w-[55px] bg-[#ff0000]">10192.30</PriceTag>
            <PriceTag className="top-[305px] w-[50px] bg-[#eb4d5c]">9561.92</PriceTag>
            <PriceTag className="top-[321px] ml-[14px] w-9 border-t border-[#f0828c] bg-[#eb4d5c] pl-1 leading-[15px]"><span className="-ml-1">36:06</span></PriceTag>
          </>
        )}
      </div>
      {active && (
        <div className="absolute top-[2px] right-[59px] flex gap-[3px]">
          <IconBox label="Move pane down" className="h-5 w-[19px] rounded border border-[#e0e3eb] bg-white"><ArrowDown size={13} strokeWidth={1.500} color="#787b86" /></IconBox>
          <IconBox label="Maximize pane" className="h-5 w-[19px] rounded border border-[#e0e3eb] bg-white">
            <svg width="11" height="11" viewBox="0 0 13 13" fill="none" stroke="#787b86"><path d="M1 4.500V3a2 2 0 0 1 2-2h7a2 2 0 0 1 2 2v1.500M1 8.500V10a2 2 0 0 0 2 2h7a2 2 0 0 0 2-2V8.500" /></svg>
          </IconBox>
        </div>
      )}
      <div className={`absolute ${active ? 'top-[2px] left-[7px]' : 'top-[4px] left-2'}`}>{legend}</div>
    </div>
    <div className="relative flex h-[177px] border-t border-[#50535e]">
      <SqueezePlot c={c} />
      <Axis c={c} y1={522} y2={698} labels={c.squeezeAxis} />
      <PaneLegend name="TTM Squeeze 20">{squeezeLegend}</PaneLegend>
    </div>
    <div className="relative flex h-[177px] border-t border-[#50535e]">
      <RsiPlot c={c} />
      <Axis c={c} y1={699} y2={875} labels={c.rsiAxis} />
      <PaneLegend name="RSI 14 close">{rsiLegend}</PaneLegend>
    </div>
    <div className={`flex border-t border-[#50535e] ${active ? 'h-5' : 'h-[22px]'}`}>
      <Plot c={c} y1={876} y2={c.bottom} label="Time axis">
        {c.times.map(([x, t]) => (
          <g key={x}>
            <rect x={x} y="876" width="1" height="3" fill="#50535e" />
            <text x={x} y="892" fontSize="10" fill="#555" textAnchor="middle">{t}</text>
          </g>
        ))}
      </Plot>
      <div className={`flex shrink-0 justify-center border-l border-[#50535e] pt-1 ${active ? 'w-[54px]' : 'w-[55px]'}`}>
        <IconBox label="Axis settings" className="size-4"><SunIcon /></IconBox>
      </div>
    </div>
  </section>
);

/* ===== TOP TOOLBAR ===== */
const ink = { fill: 'none', stroke: '#2a2e39', strokeWidth: 1.1 };

const CandleIcon = () => (
  <svg width="14" height="18" viewBox="0 0 14 18" {...ink}><path d="M1.500 3.500h3v11h-3zM3 1v2.500M3 14.500V17M9.500 6.500h3v6h-3zM11 3.500v3M11 12.500V15" /></svg>
);
const PlusCircle = () => (
  <svg width="18" height="18" viewBox="0 0 18 18" {...ink}><circle cx="9" cy="9" r="8.300" /><path d="M9 5v8M5 9h8" /></svg>
);
const FxIcon = () => (
  <svg width="14" height="17" viewBox="0 0 14 17" {...ink}><path d="M9.500 2.500C9 1.200 6.600.8 6 3.200L4.200 13c-.4 2.200-2 2.600-3.200 1.700M2.500 6.500h6M8 10.500l5 5M13 10.500l-5 5" /></svg>
);
const FinIcon = () => (
  <svg width="17" height="14" viewBox="0 0 17 14" {...ink}><path d="M1 8.500h3.500v5H1zM4.500 4.500H8v9H4.500M8 6.500h3.500v7M11.500 .700H15.500v12.800H8" /></svg>
);
const TemplatesIcon = () => (
  <svg width="18" height="16" viewBox="0 0 18 16" {...ink}><path d="M1 7l4.500-4.500 4 3.500L17 .7M1.500 15v-3M5.500 15V9.500M9.500 15v-3M13.500 15V9.500M17 15V8" /></svg>
);
const AlertIcon = () => (
  <svg width="19" height="19" viewBox="0 0 19 19" {...ink}><path d="M15.600 10.500A6.700 6.700 0 1 0 10.500 15.300M9 5v4.500H5.500M1 5.500A3 3 0 0 1 5 1.500M17 5.500A3 3 0 0 0 13 1.500M14.500 11v7M11 14.500h7" /></svg>
);
const ReplayIcon = () => (
  <svg width="14" height="12" viewBox="0 0 14 12" {...ink}><path d="M6 1.500v9L1 6zM12.800 1.500v9L7.800 6z" /></svg>
);
const LayoutIcon = () => (
  <svg width="18" height="16" viewBox="0 0 18 16" {...ink}><rect x=".7" y=".7" width="16.600" height="14.600" rx="2" /><path d="M9 1v14" /></svg>
);
const CloudIcon = () => (
  <svg width="22" height="16" viewBox="0 0 22 16" {...ink} strokeDasharray="3 1.500"><path d="M4.500 15h13a3.600 3.600 0 0 0 .5-7.200c-1 0-1.500-.3-2-1.500A5 5 0 0 0 6.500 5.500C6 8 5.500 8.300 4 8.500A3.400 3.400 0 0 0 4.500 15z" /></svg>
);
const FullIcon = () => (
  <svg width="16" height="16" viewBox="0 0 16 16" {...ink} strokeWidth="1.300"><path d="M1 5V1h4M1 1l4.500 4.500M11 1h4v4M15 1l-4.500 4.500M15 11v4h-4M15 15l-4.500-4.500M5 15H1v-4M1 15l4.500-4.500" /></svg>
);
const CameraIcon = () => (
  <svg width="20" height="17" viewBox="0 0 20 17" {...ink}><path d="M3 3.500h3L7.500 1h5L14 3.500h3a2 2 0 0 1 2 2V14a2 2 0 0 1-2 2H3a2 2 0 0 1-2-2V5.500a2 2 0 0 1 2-2z" /><circle cx="10" cy="9.300" r="3.700" /></svg>
);

const Tool = ({ icon, label, className }) => (
  <button type="button" className={`flex shrink-0 items-center border-r border-[#e0e3eb] whitespace-nowrap ${className}`}>{icon}{label}</button>
);

const TopBar = () => (
  <header className="flex h-[35px] bg-white text-[13px] text-[#131722]">
    <Tool className="w-[91px] pl-[11px] text-xs font-bold" label="BTCUSD" />
    <div className="flex w-[168px] shrink-0 items-center border-r border-[#e0e3eb] pl-[3px]">
      {['2m', '15m', '30m', '1h'].map(t => <button type="button" key={t} className={t.length === 2 ? 'w-[26px]' : 'w-[35px]'}>{t}</button>)}
      <button type="button" className="w-[22px] text-[#2196f3]">4h</button>
      <IconBox label="More intervals" className="w-[22px]"><ChevronDown size={12} strokeWidth={1.800} /></IconBox>
    </div>
    <IconBox label="Candles" className="w-[35px] shrink-0 border-r border-[#e0e3eb]"><CandleIcon /></IconBox>
    <Tool className="w-[92px] gap-[6px] pl-2" icon={<PlusCircle />} label="Compare" />
    <div className="flex w-[115px] shrink-0 items-center border-r border-[#e0e3eb] pl-[9px]">
      <button type="button" className="flex flex-1 items-center gap-2"><FxIcon />Indicators</button>
      <IconBox label="Favorite indicators" className="w-[21px]"><ChevronDown size={12} strokeWidth={1.800} /></IconBox>
    </div>
    <Tool className="w-[97px] gap-[6px] pl-2" icon={<FinIcon />} label="Financials" />
    <Tool className="w-[99px] gap-[5px] pl-2" icon={<TemplatesIcon />} label="Templates" />
    <Tool className="w-[69px] gap-[5px] pl-[7px]" icon={<AlertIcon />} label="Alert" />
    <Tool className="w-[79px] gap-[6px] pl-[11px]" icon={<ReplayIcon />} label="Replay" />
    <div className="flex w-14 shrink-0 items-center gap-3 border-r border-[#e0e3eb] pl-2">
      <IconBox label="Undo"><svg width="14" height="10" viewBox="0 0 14 10" {...ink}><path d="M4.500.7L1 4l3.500 3.300M1 4h7.500c2.500 0 4.500 1.500 4.500 5" /></svg></IconBox>
      <IconBox label="Redo"><svg width="14" height="10" viewBox="0 0 14 10" {...ink} stroke="#c1c4cd"><path d="M9.500.7L13 4 9.500 7.300M13 4H5.500C3 4 1 5.500 1 9" /></svg></IconBox>
    </div>
    <div className="flex-1 border-r border-[#e0e3eb]" />
    <IconBox label="Layout" className="w-[34px] shrink-0 border-r border-[#e0e3eb]"><LayoutIcon /></IconBox>
    <div className="flex w-[78px] shrink-0 items-center border-r border-[#e0e3eb] pl-[6px]">
      <button type="button" className="flex flex-1 items-center gap-1 text-xs"><CloudIcon />Star</button>
      <IconBox label="Layouts" className="w-[19px]"><ChevronDown size={12} strokeWidth={1.800} /></IconBox>
    </div>
    <IconBox label="Settings" className="w-[35px] shrink-0 border-r border-[#e0e3eb]"><NutIcon size={18} /></IconBox>
    <IconBox label="Fullscreen" className="w-[35px] shrink-0 border-r border-[#e0e3eb]"><FullIcon /></IconBox>
    <IconBox label="Snapshot" className="w-[35px] shrink-0"><CameraIcon /></IconBox>
    <button type="button" className="w-[72px] shrink-0 border-r border-[#90caf9] bg-[#2196f3] text-sm text-white">Publish</button>
    <IconBox label="Play" className="w-[35px] shrink-0 bg-[#2196f3]">
      <svg width="20" height="20" viewBox="0 0 20 20" fill="none" stroke="#fff"><circle cx="10" cy="10" r="9" /><path d="M8 6.500v7l5-3.500z" fill="#fff" /></svg>
    </IconBox>
  </header>
);

/* ===== DRAWING FAVORITES ===== */
const Dot = ({ x, y }) => <circle cx={x} cy={y} r="1.900" fill="#fff" />;
const DRAW_TOOLS = [
  ['Fib retracement', <g><path d="M2 4h20M2 9.500h18M2 15h20M4 20.500h18" /><Dot x={21} y={9.500} /><Dot x={3} y={20.500} /></g>],
  ['ABC wave', <g><path d="M2.500 18L8.500 12 15 18 21.500 12" /><Dot x={2.500} y={18} /><Dot x={8.500} y={12} /><Dot x={15} y={18} /><Dot x={21.500} y={12} /></g>, 'AC'],
  ['Impulse wave', <g><path d="M2.500 18L8.500 12 15 18 21.500 12" /><Dot x={2.500} y={18} /><Dot x={8.500} y={12} /><Dot x={15} y={18} /><Dot x={21.500} y={12} /></g>, '15'],
  ['Parallel channel', <g><path d="M4 17.500L16 6M9 22L21 11" /><Dot x={4} y={17.500} /><Dot x={16} y={6} /><Dot x={15} y={16.500} /></g>],
  ['Fib extension', <g><path d="M3 8.500L16 4M3 8.500v6.500M3 15h19M3 18.500h19M3 22h19" /><Dot x={2.500} y={8.500} /><Dot x={16} y={4} /><Dot x={2.500} y={15} /></g>],
  ['Horizontal line', <g><path d="M3 12.500h18" /><Dot x={12} y={12.500} /></g>],
  ['Fib time zone', <g><path d="M4 4v18M9.500 4v18M15 4v18M20.500 4v18" /><Dot x={4} y={12.500} /><Dot x={9.500} y={12.500} /></g>],
  ['Trend line', <g><path d="M4 20L20 4.500" /><Dot x={4} y={20} /><Dot x={20} y={4.500} /></g>],
  ['Cypher pattern', <g><path d="M4 20L7 5l5 6.500L18 6l2.500 11.500L12 11.500z" /><Dot x={4} y={20} /><Dot x={7} y={5} /><Dot x={12} y={11.500} /><Dot x={18} y={6} /><Dot x={20.500} y={17.500} /></g>, 'C'],
];

const DrawingBar = () => (
  <div className="absolute top-[664px] left-[3px] flex h-[35px] rounded bg-white shadow-[0_1px_5px_rgba(0,0,0,0.3)]">
    <svg width="13" height="35" viewBox="0 0 13 35" fill="#d1d4dc">
      {[13, 18, 23].map(y => <g key={y}><rect x="3" y={y - 1} width="2" height="2" /><rect x="8" y={y - 1} width="2" height="2" /></g>)}
    </svg>
    {DRAW_TOOLS.map(([name, art, mark]) => (
      <button type="button" key={name} aria-label={name} className="flex w-[35px] items-center justify-center border-l border-[#e0e3eb] last:w-[36px]">
        <svg width="24" height="25" viewBox="0 0 24 25" fill="none" stroke="#50535e" strokeWidth="1">
          {art}
          {mark && mark.length === 2 && (
            <g fill="#50535e" stroke="none" fontSize="8" fontWeight="700" textAnchor="middle"><text x="9" y="7">{mark[0]}</text><text x="21" y="7">{mark[1]}</text></g>
          )}
          {mark === 'C' && <text x="12" y="22" fill="#50535e" stroke="none" fontSize="8" fontWeight="700" textAnchor="middle">C</text>}
        </svg>
      </button>
    ))}
  </div>
);

/* ===== BOTTOM BAR ===== */
const BottomBar = () => (
  <footer className="flex h-[35px] items-center rounded-b-sm bg-white pr-[14px] pb-px pl-[9px] text-xs text-[#131722]">
    {['1D', '5D', '1M', '3M', '6M', 'YTD', '1Y', '5Y', 'All'].map(r => (
      <button type="button" key={r} className={r === 'YTD' ? 'w-9' : 'w-[27px]'}>{r}</button>
    ))}
    <span className="mr-[14px] ml-[9px] h-5 w-px bg-[#e0e3eb]" />
    <IconBox label="Go to date">
      <svg width="17" height="17" viewBox="0 0 17 17" {...ink}><path d="M2.500 7V3.500a1.500 1.500 0 0 1 1.500-1.500h10A1.500 1.500 0 0 1 15.500 3.500v9.500a1.500 1.500 0 0 1-1.500 1.500h-4M2.500 5.500h13M5.500.5v3M12.500.5v3M.5 11.500h6.500M4.500 8.500l3 3-3 3" /></svg>
    </IconBox>
    <span className="flex-1" />
    <button type="button" className="whitespace-nowrap">08:23:53 (UTC-6)</button>
    <span className="mr-[9px] ml-[15px] h-5 w-px bg-[#e0e3eb]" />
    <button type="button" className="w-6">%</button>
    <button type="button" className="w-[30px]">log</button>
    <button type="button" className="w-9">auto</button>
    <IconBox label="Maximize chart" className="ml-2">
      <svg width="17" height="17" viewBox="0 0 17 17" {...ink} strokeWidth="1.300"><path d="M1 5V3a2 2 0 0 1 2-2h2M12 1h2a2 2 0 0 1 2 2v2M16 12v2a2 2 0 0 1-2 2h-2M5 16H3a2 2 0 0 1-2-2v-2M7 1h3M7 16h3M1 7v3M16 7v3" /></svg>
    </IconBox>
  </footer>
);

export default function App() {
  return (
    <div className="relative min-h-[935px] bg-[#e0e3eb] pt-[2px] pr-[2px] pb-[2px] pl-[3px] font-['Trebuchet_MS',Lato,sans-serif]">
      <TopBar />
      <main className="mt-px mb-px grid grid-cols-[789fr_788fr] gap-[2px]">
        <Chart
          c={CHARTS[0]}
          active
          legend={(
            <>
              <Title tf="4h" o="9622.81" h="9646.00" l="9500.00" c="9561.92" chg="−55.36 (−0.58%)" />
              <Row name="ST_Darvas">
                <b className="text-[#00ffff]">10429.26</b><b className="text-[#00ffff]">9135.68</b><span className="text-[#0094ff]">0.00</span>
              </Row>
              <Row name="Multi EMA 13 21 55 1 3">
                <span className="text-[#b560c6]">9626.44</span><span className="text-[#0000ff]">9613.81</span><span className="text-[#ff0000]">9482.62</span>
              </Row>
              <VwapToolbar />
              <Collapse className="mt-[3px]" />
            </>
          )}
          squeezeLegend={<><span className="text-[#ff8cff]">−98.46</span><span className="font-bold text-[#008000]">0.00</span></>}
          rsiLegend={<span className="text-[#8e1599]">48.93</span>}
        />
        <Chart
          c={CHARTS[1]}
          legend={(
            <>
              <Title tf="1h" o="9580.57" h="9600.29" l="9500.00" c="9561.92" chg="−22.05 (−0.23%)" />
              <Row name="ST_Darvas">
                <span className="text-[#800080]">9646.00</span><span className="text-[#800080]">9380.99</span><span className="text-[#0094ff]">0.00</span>
              </Row>
              <Row name="Multi EMA 13 21 55 1 3">
                <span className="text-[#b560c6]">9563.44</span><span className="text-[#0000ff]">9584.13</span><span className="text-[#ff0000]">9633.83</span>
              </Row>
              <Row name="VWAP Session"><b className="text-[#ffbd2b]">9535.36</b></Row>
              <Collapse className="mt-1" />
            </>
          )}
          squeezeLegend={<><b className="text-[#00ffff]">78.66</b><span className="text-[#ff0000]">0.00</span></>}
          rsiLegend={<span className="text-[#8e1599]">44.89</span>}
        />
      </main>
      <BottomBar />
      <DrawingBar />
    </div>
  );
}
